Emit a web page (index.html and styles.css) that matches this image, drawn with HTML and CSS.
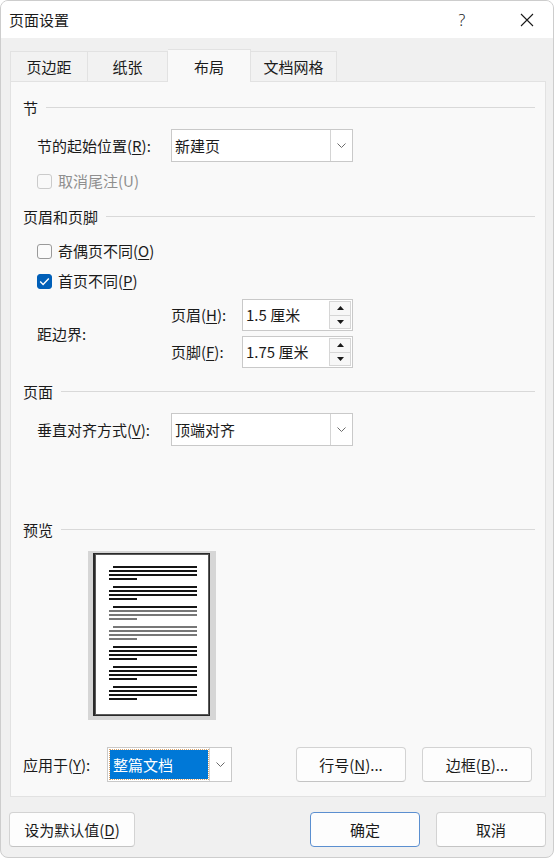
FILE: index.html
```html
<!DOCTYPE html>
<html lang="zh-CN">
<head>
<meta charset="utf-8">
<title>页面设置</title>
<link rel="stylesheet" href="styles.css">
</head>
<body>
<div class="window">
  <div class="titlebar">
    <span class="title">页面设置</span>
    <span class="cap help">?</span>
    <span class="cap close"><svg width="14" height="14" viewBox="0 0 14 14"><path d="M1 1L13 13M13 1L1 13" stroke="#1a1a1a" stroke-width="1.1" fill="none"/></svg></span>
  </div>
  <div class="tabs">
    <div class="tab t1">页边距</div>
    <div class="tab t2">纸张</div>
    <div class="tab t3 active">布局</div>
    <div class="tab t4">文档网格</div>
  </div>
  <div class="panel">
    <div class="group-head"><span>节</span><i></i></div>
    <div class="row r-start">
      <span class="lbl">节的起始位置(<u>R</u>):</span>
      <div class="combo">
        <span class="combo-text">新建页</span>
        <span class="combo-btn"><svg width="9" height="5" viewBox="0 0 9 5"><path d="M0.5 0.5L4.5 4.5L8.5 0.5" stroke="#6b6b6b" stroke-width="1" fill="none"/></svg></span>
      </div>
    </div>
    <div class="check-row disabled r-endnote">
      <span class="box"></span><span>取消尾注(U)</span>
    </div>

    <div class="group-head g2"><span>页眉和页脚</span><i></i></div>
    <div class="check-row r-odd">
      <span class="box"></span><span>奇偶页不同(<u>O</u>)</span>
    </div>
    <div class="check-row r-first">
      <span class="box checked"><svg width="15" height="15" viewBox="0 0 15 15"><path d="M3.2 7.6L6.1 10.4L11.8 4.6" stroke="#fff" stroke-width="1.4" fill="none"/></svg></span><span>首页不同(<u>P</u>)</span>
    </div>
    <div class="spin-group">
      <span class="lbl">距边界:</span>
      <div class="spin-col">
        <div class="spin-row">
          <span class="lbl2">页眉(<u>H</u>):</span>
          <div class="spin">
            <span class="spin-text">1.5 厘米</span>
            <span class="spin-btns">
              <span class="sb"><svg width="7" height="4" viewBox="0 0 7 4"><path d="M0 4L3.5 0L7 4Z" fill="#1a1a1a"/></svg></span>
              <span class="sb"><svg width="7" height="4" viewBox="0 0 7 4"><path d="M0 0L3.5 4L7 0Z" fill="#1a1a1a"/></svg></span>
            </span>
          </div>
        </div>
        <div class="spin-row">
          <span class="lbl2">页脚(<u>F</u>):</span>
          <div class="spin">
            <span class="spin-text">1.75 厘米</span>
            <span class="spin-btns">
              <span class="sb"><svg width="7" height="4" viewBox="0 0 7 4"><path d="M0 4L3.5 0L7 4Z" fill="#1a1a1a"/></svg></span>
              <span class="sb"><svg width="7" height="4" viewBox="0 0 7 4"><path d="M0 0L3.5 4L7 0Z" fill="#1a1a1a"/></svg></span>
            </span>
          </div>
        </div>
      </div>
    </div>

    <div class="group-head g3"><span>页面</span><i></i></div>
    <div class="row r-valign">
      <span class="lbl">垂直对齐方式(<u>V</u>):</span>
      <div class="combo">
        <span class="combo-text">顶端对齐</span>
        <span class="combo-btn"><svg width="9" height="5" viewBox="0 0 9 5"><path d="M0.5 0.5L4.5 4.5L8.5 0.5" stroke="#6b6b6b" stroke-width="1" fill="none"/></svg></span>
      </div>
    </div>

    <div class="group-head g4"><span>预览</span><i></i></div>
    <div class="preview">
      <div class="page">
        <div class="para"><b class="l1"></b><b></b><b></b><b class="l4"></b></div>
        <div class="para"><b class="l1"></b><b></b><b></b><b class="l4"></b></div>
        <div class="para"><b class="l1"></b><b class="g"></b><b class="g"></b><b class="l4 g"></b></div>
        <div class="para gray"><b class="l1"></b><b></b><b></b><b class="l4"></b></div>
        <div class="para"><b class="l1"></b><b></b><b></b><b class="l4"></b></div>
        <div class="para"><b class="l1"></b><b></b><b></b><b class="l4"></b></div>
        <div class="para"><b class="l1"></b><b></b><b></b><b class="l4"></b></div>
      </div>
    </div>

    <div class="apply-row">
      <span class="lbl3">应用于(<u>Y</u>):</span>
      <div class="combo apply">
        <span class="sel">整篇文档</span>
        <span class="combo-btn"><svg width="9" height="5" viewBox="0 0 9 5"><path d="M0.5 0.5L4.5 4.5L8.5 0.5" stroke="#6b6b6b" stroke-width="1" fill="none"/></svg></span>
      </div>
      <button class="btn b-line">行号(<u>N</u>)...</button>
      <button class="btn b-border">边框(<u>B</u>)...</button>
    </div>
  </div>
  <div class="footer">
    <button class="btn b-default">设为默认值(<u>D</u>)</button>
    <button class="btn b-ok">确定</button>
    <button class="btn b-cancel">取消</button>
  </div>
</div>
</body>
</html>
```
FILE: styles.css
```css
* { box-sizing: border-box; }
html, body { margin: 0; padding: 0; background: #ffffff; }
body {
  font-family: "Noto Sans CJK SC", "Microsoft YaHei", sans-serif;
  font-size: 15px;
  color: #1b1b1b;
  width: 554px;
  height: 858px;
  overflow: hidden;
}
u { text-decoration: underline; text-underline-offset: 2px; text-decoration-thickness: 1px; }

.window {
  width: 554px;
  height: 858px;
  border: 1px solid #cdcdcd;
  border-radius: 8px;
  background: #f0f0f0;
  overflow: hidden;
}
.titlebar {
  height: 37px;
  background: #ffffff;
  display: flex;
  align-items: center;
  padding-left: 8px;
}
.title { flex: 1; line-height: 20px; padding-top: 1px; }
.cap {
  width: 46px;
  height: 37px;
  display: flex;
  align-items: center;
  justify-content: center;
}
.help { margin-right: 19px; font-family: "Noto Sans", sans-serif; font-size: 16px; font-weight: 300; }
.close { margin-right: 3px; }

.tabs {
  height: 43px;
  display: flex;
  align-items: flex-end;
  padding-left: 9px;
}
.tab {
  height: 30px;
  border: 1px solid #e2e2e2;
  border-bottom: none;
  background: #f2f2f2;
  text-align: center;
  padding-top: 4px;
  line-height: 22px;
}
.tab + .tab { border-left: none; }
.t1 { width: 78px; }
.t2 { width: 80px; }
.t3 { width: 83px; }
.t4 { width: 86px; }
.tab.active {
  height: 33px;
  margin-bottom: -1px;
  background: #f9f9f9;
  padding-top: 6px;
  position: relative;
  z-index: 1;
}

.panel {
  width: 536px;
  height: 716px;
  margin-left: 9px;
  background: #f9f9f9;
  border: 1px solid #e2e2e2;
  padding: 16px 10px 0 12px;
}
.group-head {
  height: 20px;
  display: flex;
  align-items: center;
  line-height: 20px;
}
.group-head i {
  flex: 1;
  height: 1px;
  background: #d9d9d9;
  margin-left: 8px;
  margin-top: -2px;
}
.g2 { margin-top: 16px; }
.g3 { margin-top: 14px; }
.g4 { margin-top: 74px; }

.row {
  display: flex;
  align-items: center;
  margin-left: 14px;
  height: 33px;
}
.r-start { margin-top: 11px; }
.r-valign { margin-top: 11px; }
.lbl { width: 134px; line-height: 20px; }

.combo {
  width: 182px;
  height: 33px;
  display: flex;
  background: #ffffff;
  border: 1px solid #c9c9c9;
}
.combo-text { flex: 1; padding-left: 3px; line-height: 31px; }
.combo-btn {
  width: 22px;
  border-left: 1px solid #d4d4d4;
  display: flex;
  align-items: center;
  justify-content: center;
}

.check-row {
  display: flex;
  align-items: center;
  margin-left: 14px;
  height: 20px;
  line-height: 20px;
}
.box {
  width: 15px;
  height: 15px;
  border: 1px solid #9a9a9a;
  border-radius: 3px;
  background: #fbfbfb;
  margin-right: 6px;
  display: flex;
}
.box.checked { background: #005fb8; border-color: #005fb8; }
.box.checked svg { margin: -1px; }
.check-row.disabled { color: #8f8f8f; }
.check-row.disabled .box { border-color: #cbcbcb; background: #f9f9f9; }
.r-endnote { margin-top: 9px; }
.r-odd { margin-top: 14px; }
.r-first { margin-top: 10px; }

.spin-group {
  display: flex;
  align-items: center;
  margin-left: 14px;
  margin-top: 8px;
}
.spin-col { display: flex; flex-direction: column; gap: 5px; }
.spin-row { display: flex; align-items: center; height: 32px; }
.lbl2 { width: 71px; line-height: 20px; }
.spin {
  width: 111px;
  height: 32px;
  display: flex;
  background: #ffffff;
  border: 1px solid #c9c9c9;
}
.spin-text { flex: 1; padding-left: 3px; line-height: 30px; }
.spin-btns {
  width: 22px;
  margin: 1px 1px 1px 0;
  display: flex;
  flex-direction: column;
  border: 1px solid #d6d6d6;
  background: #f7f7f7;
}
.sb {
  flex: 1;
  display: flex;
  align-items: center;
  justify-content: center;
}
.sb + .sb { border-top: 1px solid #d6d6d6; }

.preview {
  width: 128px;
  height: 169px;
  margin-top: 11px;
  margin-left: 65px;
  background: #d6d6d6;
  padding: 2px 6px 4px 5px;
}
.page {
  width: 117px;
  height: 163px;
  background: #ffffff;
  border: 1px solid #2a2a2a;
  border-left-width: 2px;
  box-shadow: inset 0 0 0 1px #5a5a5a;
  padding: 12px 12px 0 14px;
  display: flex;
  flex-direction: column;
  gap: 6px;
}
.para { display: flex; flex-direction: column; gap: 2px; }
.para b { display: block; height: 2px; background: #151515; }
.para b.l1 { margin-left: 4px; }
.para b.l4 { width: 28px; }
.para b.g, .para.gray b { background: #777777; }

.apply-row {
  display: flex;
  align-items: center;
  margin-top: 27px;
  height: 35px;
}
.lbl3 { width: 84px; line-height: 20px; }
.combo.apply {
  width: 125px;
  height: 35px;
  padding: 2px 0 2px 2px;
}
.sel {
  flex: 1;
  background: #0078d7;
  color: #ffffff;
  line-height: 29px;
  padding-left: 3px;
  outline: 1px dotted #d9a36a;
  margin-right: 1px;
}
.combo.apply .combo-btn { margin: -2px 0; }

.btn {
  font-family: inherit;
  font-size: 15px;
  color: #1b1b1b;
  height: 35px;
  background: #fdfdfd;
  border: 1px solid #d3d3d3;
  border-bottom-color: #c4c4c4;
  border-radius: 4px;
  padding: 0;
  line-height: 20px;
}
.b-line { width: 110px; margin-left: 64px; }
.b-border { width: 110px; margin-left: 16px; }

.footer {
  display: flex;
  margin-top: 15px;
  padding-left: 8px;
}
.b-default { width: 126px; }
.b-ok { width: 110px; margin-left: 175px; border-color: #5b8fd0; }
.b-cancel { width: 110px; margin-left: 16px; }
```
